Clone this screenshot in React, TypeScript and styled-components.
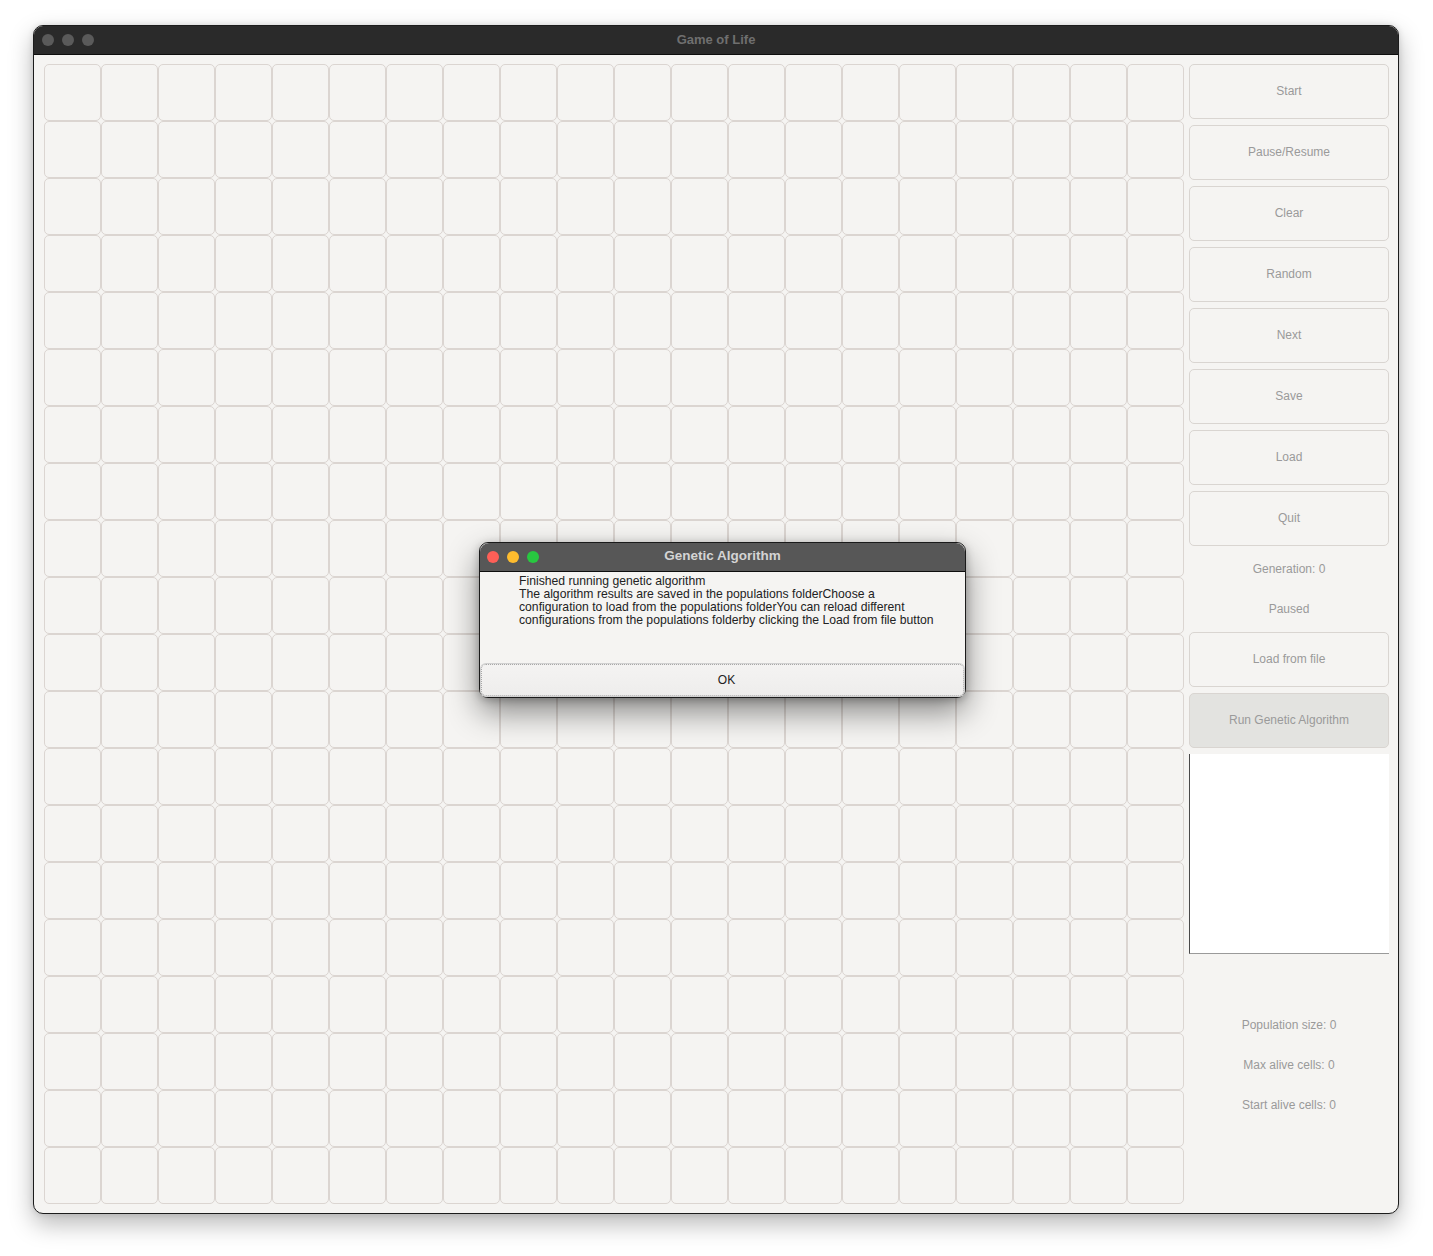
import React from 'react';
import styled, { createGlobalStyle } from 'styled-components';

const GlobalStyle = createGlobalStyle`
    html, body {
        margin: 0;
        padding: 0;
        background: #ffffff;
    }

    body {
        font-family: "Liberation Sans", Arial, sans-serif;
    }
`;

const Page = styled.div`
    padding: 25px 0 0 33px;
    width: 1433px;
    height: 1256px;
    box-sizing: border-box;
`;

const Window = styled.div`
    position: relative;
    width: 1366px;
    height: 1189px;
    box-sizing: border-box;
    border: 1px solid #1c1c1c;
    border-radius: 10px;
    background: #f5f4f2;
    box-shadow: 0 10px 24px rgba(0, 0, 0, 0.28), 0 0 6px rgba(0, 0, 0, 0.12);
`;

const TitleBar = styled.div<{ dark: string }>`
    height: 28px;
    display: flex;
    align-items: center;
    justify-content: center;
    position: relative;
    background: ${props => props.dark};
    border-bottom: 1px solid #0d0d0d;
    border-radius: 9px 9px 0 0;
`;

const Lights = styled.div<{ left: number }>`
    position: absolute;
    left: ${props => props.left}px;
    top: 8px;
    display: flex;
    gap: 8px;
`;

const Light = styled.span<{ color: string }>`
    display: block;
    width: 12px;
    height: 12px;
    border-radius: 50%;
    background: ${props => props.color};
`;

const Title = styled.span<{ color: string; size: number; lift: number }>`
    font-weight: bold;
    font-size: ${props => props.size}px;
    color: ${props => props.color};
    margin-bottom: ${props => props.lift}px;
`;

const Body = styled.div`
    display: flex;
    gap: 5px;
    padding: 9px 9px 9px 10px;
`;

const Board = styled.div`
    display: grid;
    grid-template-columns: repeat(20, 57px);
    grid-auto-rows: 57px;
`;

const Cell = styled.div`
    box-sizing: border-box;
    border: 1px solid #dbd5d1;
    border-radius: 5px;
    background: #f5f4f2;
`;

const Side = styled.div`
    width: 200px;
    display: flex;
    flex-direction: column;
    gap: 6px;
`;

const Button = styled.div<{ pressed?: boolean }>`
    box-sizing: border-box;
    height: 55px;
    padding-bottom: 2px;
    display: flex;
    align-items: center;
    justify-content: center;
    border: 1px solid #d9d5d1;
    border-radius: 5px;
    background: ${props => props.pressed ? '#e3e3e0' : '#f5f4f2'};
    color: #9a9a9a;
    font-size: 12px;
`;

const Label = styled.div`
    height: 34px;
    display: flex;
    align-items: center;
    justify-content: center;
    color: #9a9a9a;
    font-size: 12px;
`;

const ChartBox = styled.div`
    box-sizing: border-box;
    height: 200px;
    background: #ffffff;
    border-left: 1px solid #4a4a4a;
    border-bottom: 1px solid #9a9a9a;
`;

const Spacer = styled.div`
    height: 42px;
`;

const Dialog = styled.div`
    position: absolute;
    left: 445px;
    top: 516px;
    width: 487px;
    height: 156px;
    box-sizing: border-box;
    border: 1px solid #1a1a1a;
    border-radius: 9px;
    background: #f5f4f2;
    display: flex;
    flex-direction: column;
    box-shadow: 0 14px 32px rgba(0, 0, 0, 0.45), 0 2px 8px rgba(0, 0, 0, 0.25);
`;

const Message = styled.div`
    flex: 1;
    padding: 3px 0 0 39px;
    font-size: 12.2px;
    line-height: 13px;
    color: #222222;
`;

const OkButton = styled.div`
    margin: 0 1px 1px 1px;
    height: 32px;
    padding-left: 8px;
    box-sizing: border-box;
    display: flex;
    align-items: center;
    justify-content: center;
    border: 1px dotted #a8a8a8;
    border-radius: 5px;
    background: linear-gradient(#f4f3f2, #eeedec);
    box-shadow: 0 0 0 1px #d0d0d0;
    font-size: 12px;
    color: #222222;
`;

const sideButtons = ['Start', 'Pause/Resume', 'Clear', 'Random', 'Next', 'Save', 'Load', 'Quit'];

const lines = [
    'Finished running genetic algorithm',
    'The algorithm results are saved in the populations folderChoose a',
    'configuration to load from the populations folderYou can reload different',
    'configurations from the populations folderby clicking the Load from file button'
];

export default function App() {
    const cells = Array.from({ length: 400 }, (_, i) => i);
    return (
        <>
            <GlobalStyle />
            <Page>
                <Window>
                    <TitleBar dark="#2a2a2a">
                        <Lights left={8}>
                            <Light color="#5a5a5a" />
                            <Light color="#5a5a5a" />
                            <Light color="#5a5a5a" />
                        </Lights>
                        <Title color="#6f6f6f" size={13} lift={2}>Game of Life</Title>
                    </TitleBar>
                    <Body>
                        <Board>
                            {cells.map(i => <Cell key={i} />)}
                        </Board>
                        <Side>
                            {sideButtons.map(b => <Button key={b}>{b}</Button>)}
                            <Label>Generation: 0</Label>
                            <Label>Paused</Label>
                            <Button>Load from file</Button>
                            <Button pressed>Run Genetic Algorithm</Button>
                            <ChartBox />
                            <Spacer />
                            <Label>Population size: 0</Label>
                            <Label>Max alive cells: 0</Label>
                            <Label>Start alive cells: 0</Label>
                        </Side>
                    </Body>
                    <Dialog>
                        <TitleBar dark="#575757">
                            <Lights left={7}>
                                <Light color="#fe5f57" />
                                <Light color="#febc2e" />
                                <Light color="#28c840" />
                            </Lights>
                            <Title color="#d4d4d4" size={13.5} lift={3}>Genetic Algorithm</Title>
                        </TitleBar>
                        <Message>
                            {lines.map(l => <div key={l}>{l}</div>)}
                        </Message>
                        <OkButton>OK</OkButton>
                    </Dialog>
                </Window>
            </Page>
        </>
    );
}
